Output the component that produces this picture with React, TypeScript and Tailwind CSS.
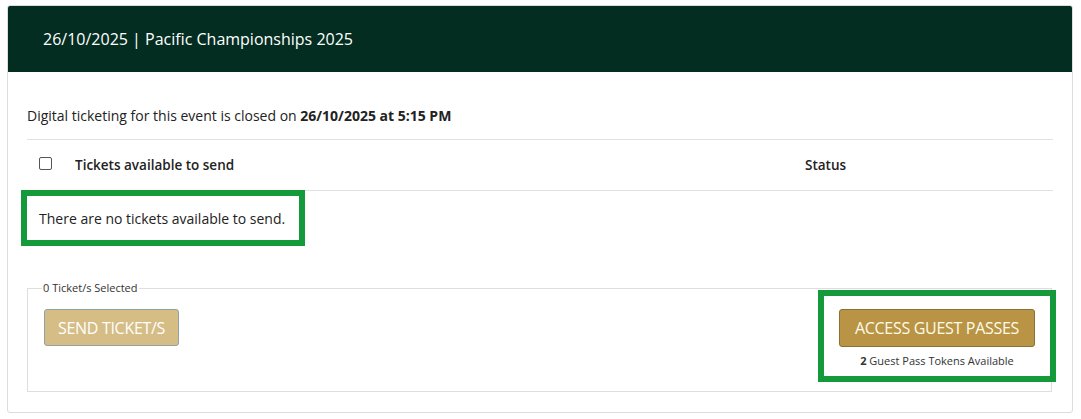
import React from "react";

export default function App() {
  return (
    <div className="min-h-[419px] w-[1081px] bg-white pl-[7px] pt-[5px] text-[#222]" style={{ fontFamily: '"Open Sans", "Liberation Sans", sans-serif' }}>
      <div className="w-[1066px] overflow-hidden rounded-[3px] border border-[#dcdcdc]">
        <div className="flex h-[66px] items-center bg-[#032d20] pl-[35px] text-[16px] text-white">
          26/10/2025 | Pacific Championships 2025
        </div>
        <div className="px-[19px] pb-[20px]">
          <div className="flex h-[67px] items-end pb-[13px] text-[14px]">
            <span>
              Digital ticketing for this event is closed on <b className="font-bold">26/10/2025 at 5:15 PM</b>
            </span>
          </div>
          <div className="flex h-[52px] items-center border-y border-[#e2e2e2] text-[13.5px] font-semibold">
            <div className="flex w-[48px] pb-[3px] pl-[12px]">
              <span className="block h-[13px] w-[13px] rounded-[2px] border border-[#555] bg-white" />
            </div>
            <div className="flex-1">Tickets available to send</div>
            <div className="w-[248px]">Status</div>
          </div>
          <div className="-mt-[1px] ml-[-6px] flex h-[56px] w-[284px] items-center border-[6px] border-[#149a3a] bg-white pl-[12px] text-[14px]">
            There are no tickets available to send.
          </div>
          <div className="relative mt-[42px] h-[104px] w-[1025px] border border-[#dedede]">
            <span className="absolute left-[14px] top-[-8px] bg-white px-[1px] text-[11px] leading-[14px] text-[#333]">
              0 Ticket/s Selected
            </span>
            <div className="flex items-start justify-between pl-[16px]">
              <button className="mt-[20px] h-[37px] w-[135px] rounded-[3px] border border-[#8fa3a6] bg-[#d5bd85] text-[16px] tracking-[-0.3px] text-white">
                SEND TICKET/S
              </button>
              <div className="mr-[-5px] mt-[1px] flex h-[92px] w-[238px] flex-col items-center border-[6px] border-[#149a3a] bg-white pt-[13px]">
                <button className="h-[38px] w-[196px] rounded-[3px] border border-[#8a7036] bg-[#b99444] text-[16px] tracking-[-0.3px] text-[#fffbea]">
                  ACCESS GUEST PASSES
                </button>
                <div className="mt-[6px] text-[11px] text-[#333]">
                  <b className="font-bold">2</b> Guest Pass Tokens Available
                </div>
              </div>
            </div>
          </div>
        </div>
      </div>
    </div>
  );
}
